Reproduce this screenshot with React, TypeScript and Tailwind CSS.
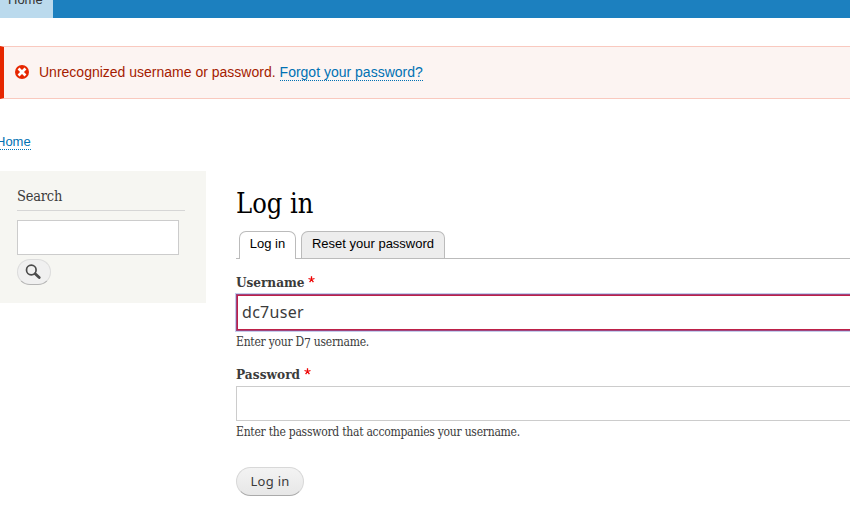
import React from "react";

const serif = "font-['DejaVu_Serif_Condensed','DejaVu_Serif',serif] [font-stretch:condensed]";
const sans = "font-['Liberation_Sans',sans-serif]";

function SearchIcon() {
  return (
    <svg width="16" height="16" viewBox="0 0 16 16" fill="none" stroke="#4b4b4b" className="-ml-[2px]">
      <circle cx="6.3" cy="6" r="4.8" strokeWidth="1.7" />
      <path d="M10.2 9.8 14.2 13.5" strokeWidth="2.8" strokeLinecap="round" />
    </svg>
  );
}

function Label({ text, width }: { text: string; width: string }) {
  return (
    <div className={`${serif} flex h-[18px] items-center text-[13.5px] font-bold leading-[18px] text-[#3b3b3b]`}>
      <span className={`${width} whitespace-nowrap`}>{text}</span>
      <svg width="7" height="7" viewBox="0 0 7 7" className="mb-[5px]" fill="none" stroke="#ee0000" strokeWidth="1.3">
        <path d="M3.5 3.5V.2M3.5 3.5.5 2.5M3.5 3.5l3-1M3.5 3.5 1.6 6.2M3.5 3.5l1.9 2.7" />
      </svg>
    </div>
  );
}

export default function App() {
  return (
    <div className={`${sans} h-[510px] w-[850px] overflow-hidden bg-white text-[#3b3b3b]`}>
      <div className="flex h-[18px] bg-[#1c80bf]">
        <div className="h-[18px] w-[53px] overflow-hidden bg-[#bbdaed] pl-[8px]">
          <div className="-mt-[8px] text-[13px] leading-[16px] text-[#333]">Home</div>
        </div>
      </div>
      <div className="mt-[28px] flex h-[53px] items-center border-y border-l-4 border-y-[#f9c9bf] border-l-[#e62600] bg-[#fcf4f2] pb-px pl-[11px] text-[14px] leading-[18px] text-[#a51b00]">
        <svg width="14" height="14" viewBox="0 0 14 14">
          <circle cx="7" cy="7" r="7" fill="#e62600" />
          <path d="m4.5 4.5 5 5m0-5-5 5" stroke="#fff" strokeWidth="2.7" strokeLinecap="square" />
        </svg>
        <span className="ml-[10px]">Unrecognized username or password.</span>
        <span className="ml-[4px] mt-px h-[17px] border-b border-dotted border-[#0071b3] leading-[16px] text-[#0071b3]">Forgot your password?</span>
      </div>
      <div className="flex h-[72px] pt-[34px]">
        <span className="-ml-[4px] h-[17px] border-b border-dotted border-[#0071b3] text-[13px] leading-[17px] text-[#0071b3]">Home</span>
      </div>
      <div className="flex items-start">
        <aside className="h-[132px] w-[206px] bg-[#f6f6f2] pl-[17px] pt-[15px]">
          <h2 className={`${serif} h-[25px] w-[168px] border-b border-[#d6d6d6] text-[14.5px] leading-[20px] tracking-[-0.2px]`}>Search</h2>
          <div className="mt-[9px] h-[35px] w-[162px] border border-[#ccc] bg-white" />
          <button className="mt-[4px] flex h-[26px] w-[34px] items-center justify-center rounded-full border border-[#dcdcdc] border-b-[#b4b4b4] bg-[#f0f0f0]">
            <SearchIcon />
          </button>
        </aside>
        <main className="ml-[30px] w-[614px] pt-[14px]">
          <h1 className={`${serif} h-[46px] text-[27px] leading-[38px] text-black`}>Log in</h1>
          <div className="flex h-[28px] items-end border-b border-[#bbb] pl-[3px] text-[13px] text-black">
            <div className="-mb-px h-[28px] w-[57px] rounded-t-[7px] border border-b-0 border-[#bbb] bg-white pt-[4px] text-center leading-[16px]">Log in</div>
            <div className="ml-[5px] h-[27px] w-[144px] rounded-t-[7px] border border-b-0 border-[#bbb] bg-[#ededed] pt-[4px] text-center leading-[16px]">Reset your password</div>
          </div>
          <div className="pt-[14px]">
            <Label text="Username" width="w-[72px] tracking-[-0.05px]" />
            <div className="mt-[3px] h-[37px] w-[640px] border border-[#a0457e] bg-white pl-[5px] font-['Noto_Sans',sans-serif] text-[16px] leading-[35px] tracking-[0.3px] shadow-[0_0_0_1px_#c4cdec,inset_0_0_0_1px_#bd2048]">dc7user</div>
            <div className={`${serif} mt-[3px] text-[12px] leading-[16px] tracking-[-0.25px]`}>Enter your D<span className="relative top-[2px]">7</span> username.</div>
          </div>
          <div className="pt-[15px]">
            <Label text="Password" width="w-[68px] tracking-[0.05px]" />
            <div className="mt-[3px] h-[35px] w-[640px] border border-[#ccc] bg-white" />
            <div className={`${serif} mt-[3px] text-[12px] leading-[16px] tracking-[-0.25px]`}>Enter the password that accompanies your username.</div>
          </div>
          <button className="mt-[27px] h-[29px] w-[68px] rounded-full border border-[#d8d8d8] border-b-[#aaa] bg-linear-to-b from-[#f3f3f3] to-[#e7e7e7] font-['Noto_Sans',sans-serif] text-[13px] leading-[27px] tracking-[0.3px]">Log in</button>
        </main>
      </div>
    </div>
  );
}
